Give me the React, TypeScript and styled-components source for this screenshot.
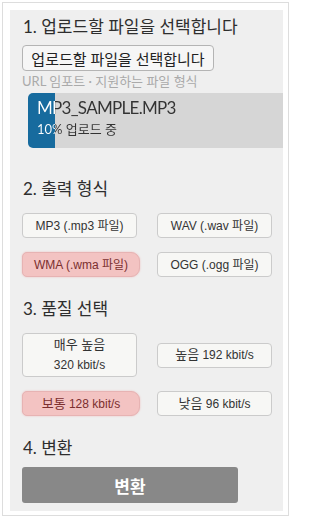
import React, { useState } from 'react'
import styled, { createGlobalStyle } from 'styled-components'

const Global = createGlobalStyle`
	html, body { margin: 0; padding: 0; background: #fff; }
	body { font-family: Lato, "Noto Sans CJK KR", sans-serif; color: #333; }
`

const Frame = styled.div`
	margin: 2px;
	width: 273px;
	height: 501px;
	padding: 7px 5px 4px 7px;
	border: 1px solid #ddd;
`
const Panel = styled.div`
	background: #efefef;
	height: 100%;
	padding: 6px 0 0 12px;
	box-sizing: border-box;
	display: flex;
	flex-direction: column;
`
const Heading = styled.h2<{ $top: number }>`
	margin: ${p => p.$top}px 0 0 1px;
	font-size: 17px;
	line-height: 22px;
	font-weight: 400;
	color: #2e2e2e;
`
const UploadButton = styled.button`
	margin-top: 7px;
	width: 192px;
	height: 26px;
	padding: 0;
	border: 1px solid #b4b4b4;
	border-radius: 4px;
	background: #f6f6f6;
	font-family: Lato, "Noto Sans CJK KR", sans-serif;
	font-size: 15px;
	color: #222;
	text-align: center;
`
const Links = styled.div`
	margin-top: 2px;
	font-size: 13px;
	line-height: 16px;
	color: #aaa;
`
const Bar = styled.div`
	margin: 4px 0 0 6px;
	height: 55px;
	border-radius: 5px 0 0 5px;
	background-color: #d6d6d6;
	background-repeat: no-repeat;
`
const ProgressText = styled.div`
	padding: 4px 0 0 9px;
	white-space: nowrap;
	color: transparent;
	-webkit-background-clip: text;
	background-clip: text;
`
const FileName = styled.div`
	font-size: 17px;
	line-height: 22px;
	letter-spacing: -0.7px;
`
const Status = styled.div`
	font-size: 13px;
	line-height: 20px;
`
const Grid = styled.div<{ $top: number }>`
	margin-top: ${p => p.$top}px;
	display: grid;
	grid-template-columns: 115px 115px;
	column-gap: 20px;
	row-gap: 14px;
	align-items: center;
`
const Choice = styled.button<{ $on?: boolean; $tall?: boolean }>`
	height: ${p => (p.$tall ? 44 : 25)}px;
	width: ${p => (p.$on ? 118 : 115)}px;
	padding: 0;
	border: 1px solid ${p => (p.$on ? '#e7b3b3' : '#cbcbcb')};
	border-radius: ${p => (p.$on ? '5px 9px 9px 5px' : '4px')};
	background: ${p => (p.$on ? '#f3c3c2' : '#f7f7f5')};
	color: ${p => (p.$on ? '#7b2f2f' : '#333')};
	font-family: "Liberation Sans", "Noto Sans CJK KR", sans-serif;
	font-size: 12px;
	line-height: 20px;
	text-align: center;
	box-shadow: ${p => (p.$on ? '0 0 2px #eebbbb' : 'none')};
`
const Korean = styled.span`
	font-size: 13px;
`
const Convert = styled.button`
	margin-top: 8px;
	width: 216px;
	height: 36px;
	border: none;
	border-radius: 3px;
	background: #888;
	color: #fff;
	font-family: Lato, "Noto Sans CJK KR", sans-serif;
	font-size: 17px;
	font-weight: 700;
`

const formats = ['MP3 (.mp3 파일)', 'WAV (.wav 파일)', 'WMA (.wma 파일)', 'OGG (.ogg 파일)']

export default function App() {
	const [format, setFormat] = useState(2)
	const [quality, setQuality] = useState(2)
	const percent = 10
	const fill = 27

	return (
		<>
			<Global />
			<Frame>
				<Panel>
					<Heading $top={0}>1. 업로드할 파일을 선택합니다</Heading>
					<UploadButton>업로드할 파일을 선택합니다</UploadButton>
					<Links>URL 임포트 · 지원하는 파일 형식</Links>
					<Bar style={{ backgroundImage: 'linear-gradient(#176b9e, #176b9e)', backgroundSize: `${fill}px 100%` }}>
						<ProgressText style={{ backgroundImage: `linear-gradient(90deg, #fff ${fill}px, #333 ${fill}px)` }}>
							<FileName>MP3_SAMPLE.MP3</FileName>
							<Status>{percent}% 업로드 중</Status>
						</ProgressText>
					</Bar>

					<Heading $top={30}>2. 출력 형식</Heading>
					<Grid $top={13}>
						{formats.map((f, i) => (
							<Choice key={f} $on={format === i} onClick={() => setFormat(i)}>{f}</Choice>
						))}
					</Grid>

					<Heading $top={21}>3. 품질 선택</Heading>
					<Grid $top={13}>
						<Choice $tall $on={quality === 0} onClick={() => setQuality(0)}>
							<Korean>매우 높음</Korean><br />320 kbit/s
						</Choice>
						<Choice $on={quality === 1} onClick={() => setQuality(1)}><Korean>높음</Korean> 192 kbit/s</Choice>
						<Choice $on={quality === 2} onClick={() => setQuality(2)}><Korean>보통</Korean> 128 kbit/s</Choice>
						<Choice $on={quality === 3} onClick={() => setQuality(3)}><Korean>낮음</Korean> 96 kbit/s</Choice>
					</Grid>

					<Heading $top={21}>4. 변환</Heading>
					<Convert>변환</Convert>
				</Panel>
			</Frame>
		</>
	)
}
